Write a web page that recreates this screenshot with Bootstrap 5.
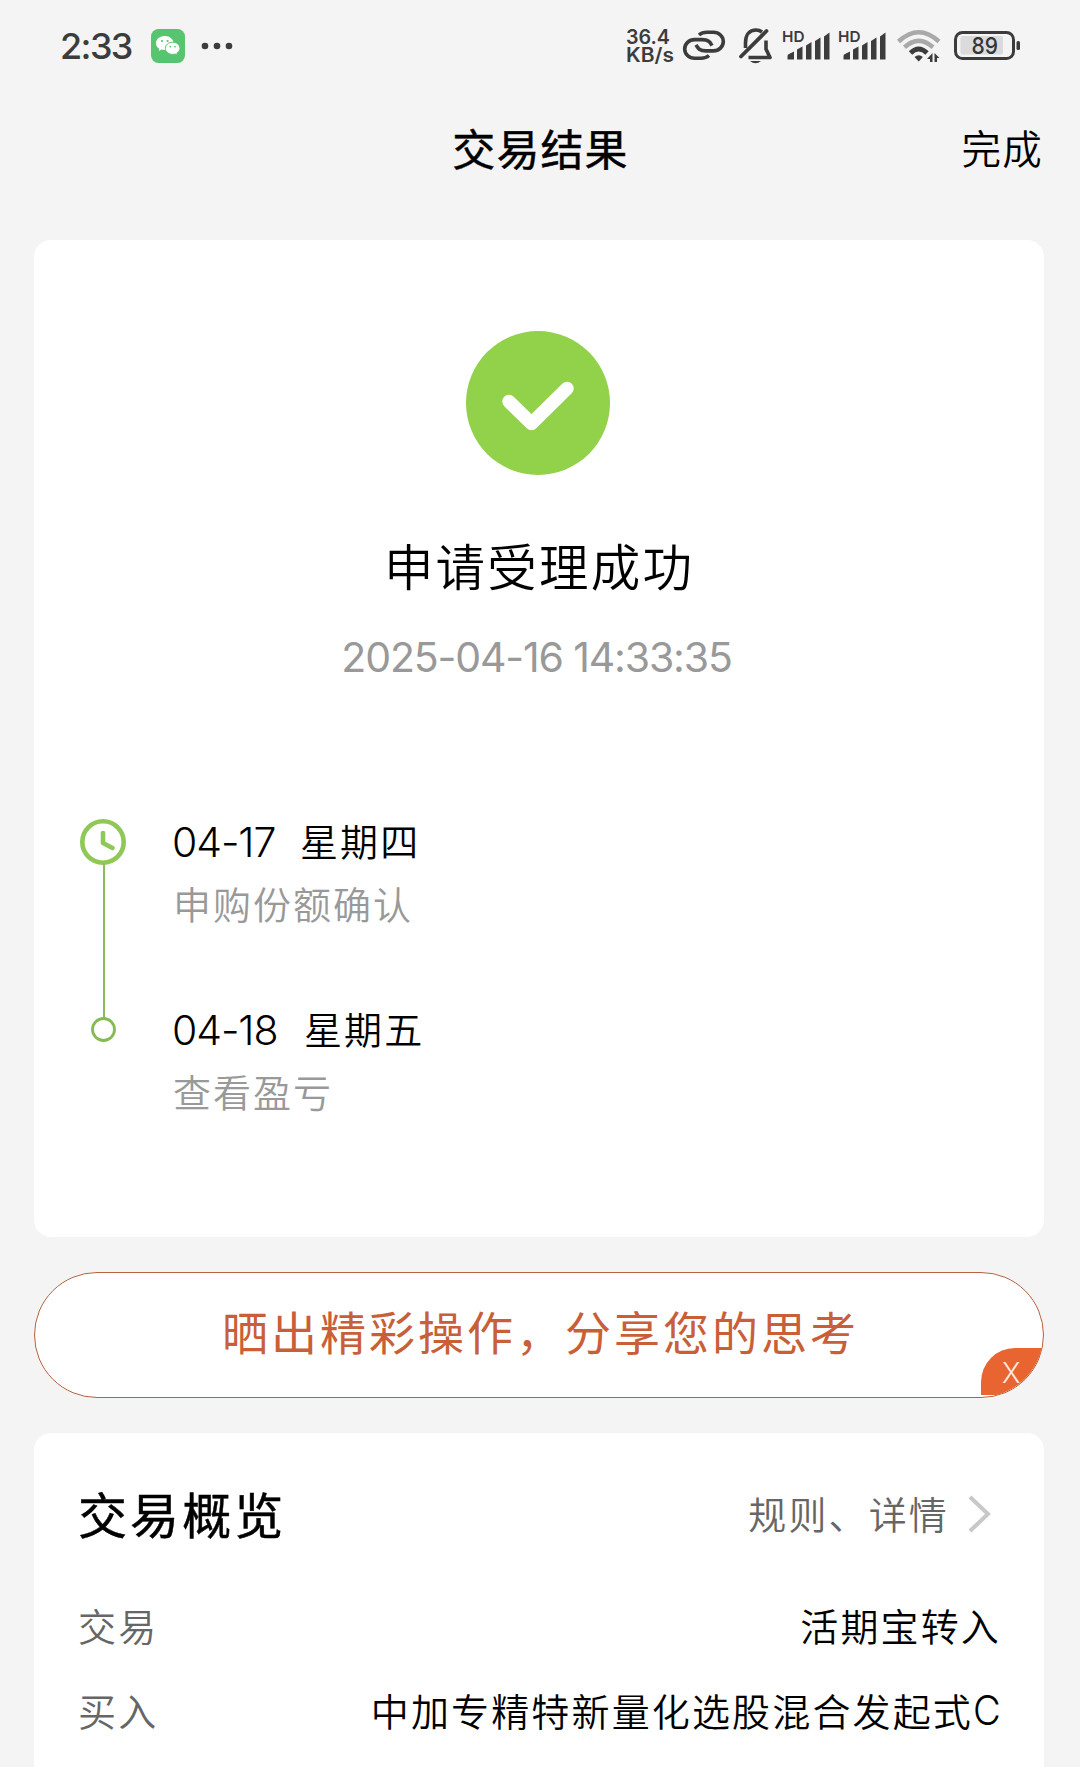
<!DOCTYPE html>
<html lang="zh-CN">
<head>
<meta charset="utf-8">
<meta name="viewport" content="width=device-width, initial-scale=1">
<title>交易结果</title>
<link href="https://cdn.jsdelivr.net/npm/bootstrap@5.3.0/dist/css/bootstrap.min.css" rel="stylesheet">
<style>
  body { background: #f4f4f4; color: #000; font-family: Inter, "Noto Sans CJK SC", sans-serif; }
  .screen { width: 1080px; height: 1767px; }
  .zh { font-family: "Noto Sans CJK SC", sans-serif; white-space: nowrap; }
  .status { height: 92px; color: #3c3c3c; padding: 0 60px 0 60px; }
  .clock-time { font: 500 36px/60px Inter, sans-serif; letter-spacing: -1.6px; width: 91px; }
  .topbar { height: 148px; padding: 25px 37px 0 38px; display: grid; grid-template-columns: 1fr auto 1fr; }
  .topbar h1 { font-size: 43px; line-height: 60px; font-weight: 400; letter-spacing: 1.1px; -webkit-text-stroke: .5px #000; }
  .topbar .done { font-size: 39.5px; line-height: 60px; font-weight: 350; letter-spacing: 1.3px; }
  .panel { width: 1010px; margin-left: 34px; background: #fff; border-radius: 17px; }
  .result { height: 997px; padding-top: 91px; }
  .result h2 { font-size: 49.5px; line-height: 70px; font-weight: 350; letter-spacing: 2.2px; margin-top: 55px; }
  .stamp { font-size: 41px; line-height: 50px; font-weight: 400; letter-spacing: -1.15px; color: #999; margin: 32px 5px 0 0; }
  .steps { margin: 133px 0 0 46px; gap: 46px; }
  .step-day { font-size: 38px; line-height: 50px; font-weight: 350; letter-spacing: 2.1px; height: 50px; }
  .num { font: 350 41px/55px Inter, sans-serif; letter-spacing: -1.1px; text-indent: -1px; }
  .num-a { width: 127px; } .num-b { width: 131px; }
  .sub { font-size: 38px; line-height: 50px; font-weight: 350; letter-spacing: 2px; color: #999; margin-top: 13px; }
  .step + .step { margin-top: 75px; }
  .share { height: 126px; width: 1010px; margin: 35px 0 35px 34px; border: 2px solid #c67a58; border-width: 1.5px; border-color: #b8623d; border-radius: 63px; background: #fff; color: #c95f38; font-size: 46px; letter-spacing: 3px; overflow: hidden; line-height: 60px; padding: 0 0 10px 3px; }
  .dismiss { right: 0; bottom: 2px; width: 62px; height: 47px; background: #e86431; border-radius: 34px 0 0 0; color: #ffeadd; font: 350 28px/50px Inter, sans-serif; letter-spacing: 0; padding-left: 21px; }
  .overview { height: 334px; padding: 45px 43px 0 44px; border-radius: 17px 17px 0 0; }
  .overview h2 { font-size: 49px; line-height: 70px; font-weight: 400; letter-spacing: 3.1px; -webkit-text-stroke: .5px #000; }
  .line { font-size: 38px; line-height: 50px; font-weight: 350; letter-spacing: 2.15px; }
  .row-first { margin-top: 52px; }
  .row-next { margin-top: 35px; }
  .arrow { margin: 1px 9px 0 19px; }
  .share-class { display: inline-block; width: 29px; margin-right: -1px; font: 350 41px/51px Inter, sans-serif; letter-spacing: 0; }
  .share-class b { display: inline-block; font-weight: inherit; transform: scaleX(.93); transform-origin: left; }
  .soft { color: #666; }
</style>
</head>
<body>
<div class="screen overflow-hidden">
  <div class="status d-flex align-items-center">
    <div class="clock-time">2:33</div>
    <svg width="34" height="34" viewBox="0 0 34 34"><rect width="34" height="34" rx="7.5" fill="#57c56f"/><path d="M13.8 7C8.900 7 5 10.100 5 14.200c0 2.400 1.300 4.300 3.300 5.600L7.800 22l2.900-1.400c1.200.3 2.100.5 3.100.5 4.900 0 8.800-3.100 8.800-6.900S18.700 7 13.800 7z" fill="#fff"/><path d="M21.700 13.200c-4.100 0-7.300 2.700-7.300 6.100s3.200 6.100 7.300 6.100c.9 0 1.700-.1 2.500-.4l2.300 1.300-.6-2.100c1.900-1.100 3.100-2.900 3.100-4.900 0-3.400-3.200-6.100-7.300-6.100z" fill="#fff" stroke="#57c56f" stroke-width="1"/><g fill="#57c56f"><circle cx="11" cy="12" r="1.100"/><circle cx="16.600" cy="12" r="1.100"/><circle cx="19.300" cy="17.600" r=".9"/><circle cx="24" cy="17.600" r=".9"/></g></svg>
    <svg class="ms-3" width="34" height="10" viewBox="0 0 34 10" fill="#3c3c3c"><circle cx="4" cy="5" r="3.300"/><circle cx="16" cy="5" r="3.300"/><circle cx="28" cy="5" r="3.300"/></svg>
    <svg class="ms-auto" width="400" height="50" viewBox="620 21 400 50" fill="none" stroke="#3c3c3c">
      <g fill="#3c3c3c" stroke="none" font-family="Inter, sans-serif" font-weight="600">
        <text x="626" y="43.500" font-size="20" textLength="44" lengthAdjust="spacingAndGlyphs">36.4</text>
        <text x="626" y="62" font-size="19.500" textLength="48" lengthAdjust="spacingAndGlyphs">KB/s</text>
        <text x="782" y="42" font-size="15" textLength="22.500" lengthAdjust="spacingAndGlyphs">HD</text>
        <text x="838" y="42" font-size="15" textLength="22.500" lengthAdjust="spacingAndGlyphs">HD</text>
        <text x="971.500" y="53.500" font-size="23.500" font-weight="450" textLength="26.500" lengthAdjust="spacingAndGlyphs">89</text>
      </g>
      <g stroke-width="3.600">
        <path d="M699 35q3-2.700 8-2.700h6.500a9.800 9.300 0 0 1 0 18.600h-7.500c-6.500 0-8-2.500-10-6"/>
        <path d="M709 55.500q-3 2.700-8 2.700h-6.500a9.800 9.300 0 0 1 0-18.600h7.500c6.500 0 8 2.500 10 6"/>
        <path d="M741 56.500L766.500 31" stroke-width="3.800" stroke-linecap="round"/>
        <path d="M745.500 48V43c0-8.500 4-13 10.500-13 2.500 0 4.500.8 6 2M766 40.500v8.500l4 8.500H748.500" stroke-linejoin="round"/>
        <path d="M750 61h11q-5.500 4.500-11 0z" fill="#3c3c3c" stroke="none"/>
      </g>
      <g id="bars" fill="#3c3c3c" stroke="none"><path d="M787.500 59.500v-3.500q0-1.500 1.500-2l5-2.500v8zM797 59.500v-10l5.500-3v13zM806 59.500v-14l5.500-3.500v17.500zM815 59.500v-18.500l5.500-3.500v22zM824 59.500v-23l5.500-4v27z"/></g>
      <use href="#bars" x="56"/>
      <g stroke="#a9a9a9" stroke-width="4.500"><path d="M898.500 41.500Q918.700 23 939 41.500"/><path d="M904.500 47.200Q918.700 34.500 933 47.200"/></g>
      <path d="M910.500 53Q918.700 45 927 53" stroke-width="4.800"/>
      <path d="M914.500 57q4.200-3.500 8.400 0l-4.200 4.500zM932.500 53v9h-2.500v-3h-3zM934.500 62V53l5 5h-2.500v4z" fill="#3c3c3c" stroke="none"/>
      <rect x="955.500" y="32.500" width="58" height="26" rx="7" stroke-width="3"/>
      <rect x="960.500" y="36" width="42.500" height="18.500" rx="2" fill="#000" fill-opacity=".1" stroke="none"/>
      <rect x="1016.500" y="41" width="3.500" height="9" rx="1.500" fill="#3c3c3c" stroke="none"/>
    </svg>
  </div>

  <header class="topbar">
    <span></span>
    <h1 class="zh m-0">交易结果</h1>
    <span class="zh done text-end">完成</span>
  </header>

  <section class="panel result">
    <div class="text-center">
      <svg class="d-block mx-auto" width="146" height="144" viewBox="0 0 146 144"><circle cx="72" cy="72" r="72" fill="#92d14a"/><path d="M43 70.500L65.500 92.500L101 57.500" fill="none" stroke="#fff" stroke-width="13.500" stroke-linecap="round" stroke-linejoin="round"/></svg>
      <h2 class="zh mb-0">申请受理成功</h2>
      <div class="stamp">2025-04-16 14:33:35</div>
    </div>
    <div class="steps d-flex">
      <svg width="47" height="240" viewBox="80 815 47 240" fill="none" stroke="#8fc857"><path d="M104 864V1018" stroke="#8cba5c" stroke-width="2"/><circle cx="103" cy="842" r="20.700" stroke-width="4.600"/><path d="M103 833v10l9.500 5" stroke-width="4.600" stroke-linecap="round" stroke-linejoin="round"/><circle cx="103.500" cy="1029.500" r="11" stroke="#85bb52" stroke-width="2.800"/></svg>
      <div>
        <div class="step">
          <div class="step-day zh d-flex"><span class="num num-a">04-17</span><span>星期四</span></div>
          <div class="sub zh">申购份额确认</div>
        </div>
        <div class="step">
          <div class="step-day zh d-flex"><span class="num num-b">04-18</span><span>星期五</span></div>
          <div class="sub zh">查看盈亏</div>
        </div>
      </div>
    </div>
  </section>

  <div class="share zh position-relative d-flex align-items-center justify-content-center">
    <span>晒出精彩操作，分享您的思考</span>
    <span class="dismiss position-absolute">X</span>
  </div>

  <section class="panel overview">
    <div class="d-flex align-items-center justify-content-between">
      <h2 class="zh m-0">交易概览</h2>
      <div class="line soft zh d-flex align-items-center">规则、详情
        <svg class="arrow" width="24" height="40" viewBox="0 0 24 40" fill="none" stroke="#c8c8c8" stroke-width="4"><path d="M2 3L20 20L2 37"/></svg>
      </div>
    </div>
    <div class="line row-first zh d-flex justify-content-between"><span class="soft">交易</span><span>活期宝转入</span></div>
    <div class="line row-next zh d-flex justify-content-between"><span class="soft">买入</span><span class="d-flex">中加专精特新量化选股混合发起式<span class="share-class"><b>C</b></span></span></div>
  </section>
</div>
<script src="https://cdn.jsdelivr.net/npm/bootstrap@5.3.0/dist/js/bootstrap.bundle.min.js"></script>
</body>
</html>
